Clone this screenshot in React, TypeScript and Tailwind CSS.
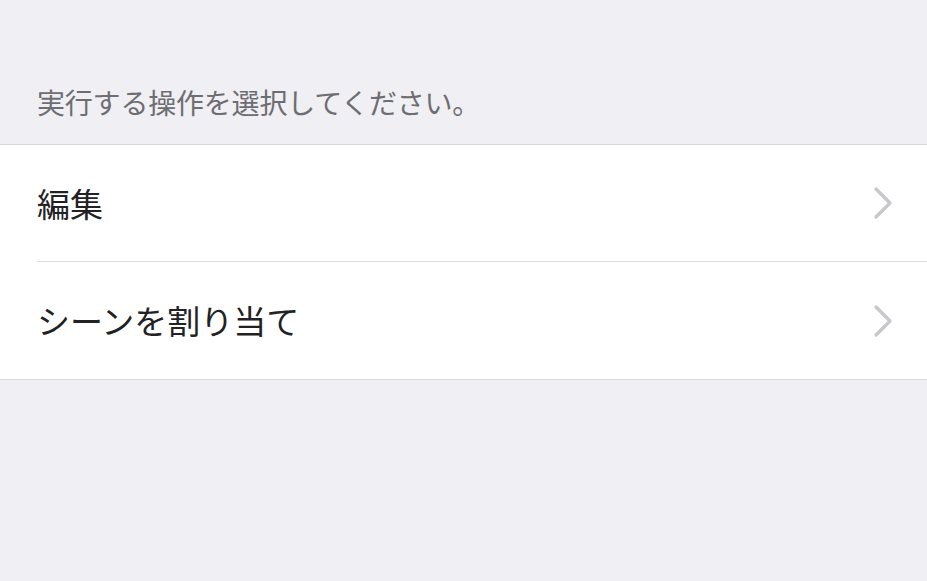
const rows = ["編集", "シーンを割り当て"];

function Chevron() {
  return (
    <svg width="22" height="34" viewBox="0 0 22 34" fill="none">
      <path d="M4 3 L18 17 L4 31" stroke="#c7c7cc" strokeWidth="3.2" strokeLinecap="round" strokeLinejoin="round" />
    </svg>
  );
}

export default function App() {
  return (
    <div
      className="h-[581px] w-[927px] bg-[#efeff4] overflow-hidden"
      style={{ fontFamily: '"Noto Sans CJK JP", "Noto Sans", sans-serif' }}
    >
      <div className="h-[144px] px-[37px] pt-[86px] text-[28px] leading-[32px] tracking-[-0.2px] text-[#6d6d72]">
        実行する操作を選択してください。
      </div>
      <div className="border-y border-[#d6d6da] bg-white">
        {rows.map((label, i) => (
          <div key={label} className="pl-[37px]">
            <div
              className={
                "flex h-[117px] items-center justify-between pr-[33px] " +
                (i < rows.length - 1 ? "border-b border-[#dcdcdf]" : "")
              }
            >
              <span className="text-[33px] leading-none text-[#222224]">{label}</span>
              <Chevron />
            </div>
          </div>
        ))}
      </div>
    </div>
  );
}
